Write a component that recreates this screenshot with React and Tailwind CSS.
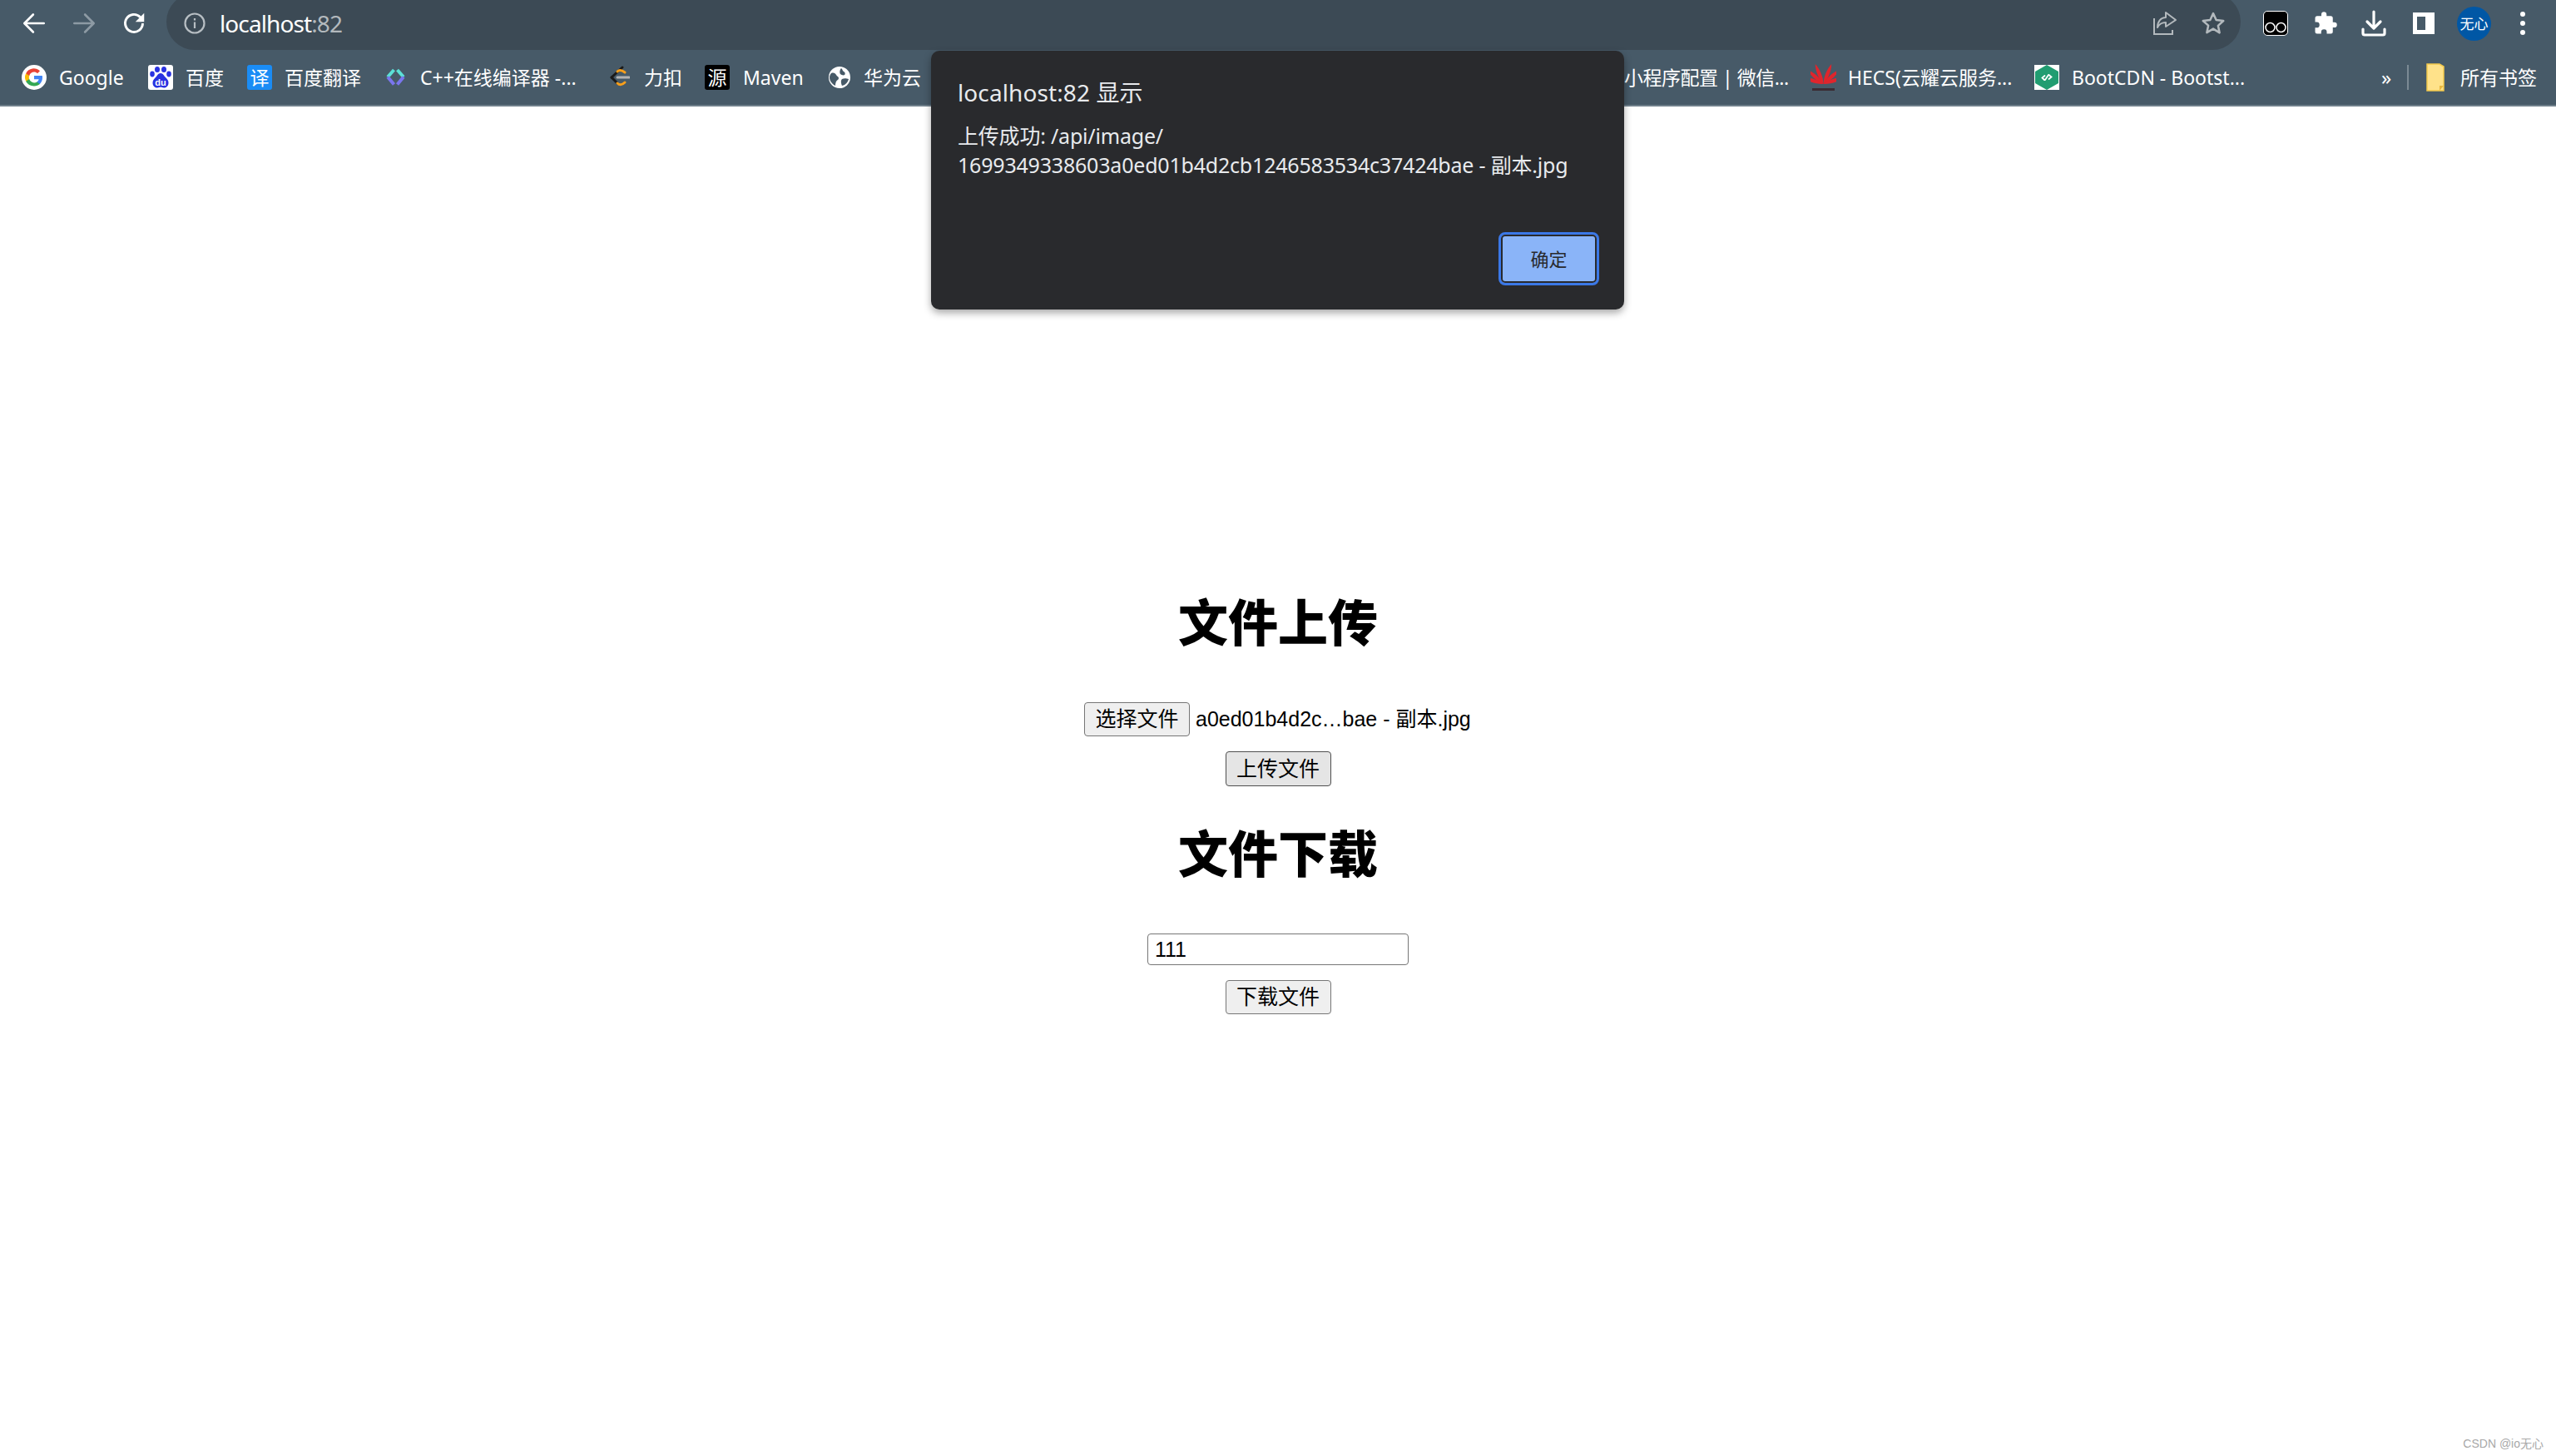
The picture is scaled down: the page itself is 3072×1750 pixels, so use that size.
import React from "react";

const ui = { fontFamily: '"Noto Sans", "Noto Sans CJK SC", sans-serif' };
const page = { fontFamily: '"Liberation Sans", "Noto Sans CJK SC", sans-serif' };

function GoogleIcon() {
  return (
    <svg width="30" height="30" viewBox="0 0 30 30">
      <circle cx="15" cy="15" r="15" fill="#fff" />
      <path d="M25 15.300c0-.8-.1-1.500-.2-2.200H15v4.100h5.600c-.2 1.300-1 2.400-2.100 3.100v2.600h3.400c2-1.800 3.100-4.500 3.100-7.600z" fill="#4285F4" />
      <path d="M15 25.500c2.800 0 5.200-.9 6.900-2.500l-3.400-2.600c-.9.600-2.100 1-3.500 1-2.700 0-5-1.800-5.800-4.300H5.200v2.700C6.900 23.200 10.700 25.500 15 25.500z" fill="#34A853" />
      <path d="M9.200 17.100c-.5-1.400-.5-2.800 0-4.200v-2.700H5.200a10.500 10.500 0 0 0 0 9.600l4-2.700z" fill="#FBBC05" />
      <path d="M15 8.600c1.500 0 2.900.5 4 1.600l3-3A10.500 10.500 0 0 0 5.200 10.200l4 2.700c.8-2.500 3.100-4.300 5.800-4.300z" fill="#EA4335" />
    </svg>
  );
}

function BaiduIcon() {
  return (
    <svg width="30" height="30" viewBox="0 0 30 30">
      <rect width="30" height="30" rx="3" fill="#fff" />
      <g fill="#2932e1">
        <ellipse cx="11" cy="5.500" rx="3" ry="3.600" />
        <ellipse cx="19" cy="5.500" rx="3" ry="3.600" />
        <ellipse cx="5" cy="11" rx="2.800" ry="3.400" />
        <ellipse cx="25" cy="11" rx="2.800" ry="3.400" />
        <path d="M15 10c-3 0-4 3-6 5-2 2-3.500 3.500-3.500 6.500 0 4 3 6 5.500 6 2 0 2.500-.7 4-.7s2 .7 4 .7c2.500 0 5.500-2 5.500-6 0-3-1.500-4.500-3.500-6.500-2-2-3-5-6-5z" />
      </g>
      <text x="15" y="25" textAnchor="middle" fontSize="11" fontWeight="700" fill="#fff" fontFamily="Liberation Sans, sans-serif">du</text>
    </svg>
  );
}

function CodeIcon() {
  return (
    <svg width="25" height="25" viewBox="0 0 25 25" fill="none" strokeWidth="4" strokeLinecap="butt">
      <path d="M10.500 3 3 11.500" stroke="#5ce1d6" />
      <path d="M3 11.500l7.500 9" stroke="#7a76ee" />
      <path d="M14.500 3 22 11.500" stroke="#5ce1d6" />
      <path d="M22 11.500l-7.500 9" stroke="#7a76ee" />
    </svg>
  );
}

function LeetIcon() {
  return (
    <svg width="25" height="30" viewBox="0 0 25 30" fill="none" strokeWidth="3" strokeLinecap="round">
      <path d="M16 3 3 15" stroke="#1a1a1a" />
      <path d="M3 15l7 7" stroke="#1a1a1a" />
      <path d="M10 22c2 2 5 3 9-1" stroke="#f89f1b" />
      <path d="M10 8c2-2 5-2 9 1" stroke="#f89f1b" />
      <path d="M10 15h14" stroke="#b3b3b3" />
    </svg>
  );
}

function GlobeIcon() {
  return (
    <svg width="26" height="26" viewBox="0 0 26 26">
      <circle cx="13" cy="13" r="13" fill="#fff" />
      <path d="M3 8c3-1 5 0 6 2s3 2 3 4-2 2-3 4-1 5-1 5C4 21 1 17 1 13c0-2 1-4 2-5z" fill="#475a68" />
      <path d="M15 2c2 1 1 3 3 4s2 3 1 4-4 0-5-1-1-5 1-7zM16 15c2-1 5-1 8 0-1 4-4 7-8 8-1-2-2-6 0-8z" fill="#475a68" />
    </svg>
  );
}

function HuaweiIcon() {
  return (
    <svg width="31" height="36" viewBox="0 0 31 36">
      <g fill="#e0252c">
        {[-72, -48, -22, 22, 48, 72].map((a) => (
          <path key={a} d="M15.500 26C12.500 18 12.500 8 15.500 0 18.500 8 18.500 18 15.500 26z" transform={`rotate(${a} 15.500 26)`} />
        ))}
      </g>
      <rect x="2" y="31" width="27" height="3" fill="#3a2c33" />
    </svg>
  );
}

function BootIcon() {
  return (
    <svg width="30" height="30" viewBox="0 0 30 30">
      <rect width="30" height="30" fill="#fff" />
      <path d="M15 0 29 8v14l-14 8-14-8V8z" fill="#219d71" />
      <path d="M12.500 13 9.500 15.500 12 18M17.500 12l3 2.500-3 2.500M13 18l4-6" fill="none" stroke="#fff" strokeWidth="1.800" strokeLinecap="round" />
    </svg>
  );
}

function FolderIcon() {
  return (
    <svg width="22" height="34" viewBox="0 0 22 34">
      <path d="M1 1h15l5 3v29H1z" fill="#ffe28a" stroke="#f2c94c" strokeWidth="1.500" />
      <path d="M16 33v-6h5" fill="#e9b93f" />
    </svg>
  );
}

function Bookmark({ icon, label, className }) {
  return (
    <div className={`flex shrink-0 items-center ${className}`}>
      {icon}
      <span className="text-[23px] leading-[30px] whitespace-nowrap text-white">{label}</span>
    </div>
  );
}

function Tile({ bg, children }) {
  return (
    <div className={`flex h-[30px] w-[30px] items-center justify-center rounded-[3px] text-[23px] leading-none text-white ${bg}`}>
      {children}
    </div>
  );
}

export default function App() {
  return (
    <div className="relative h-[1750px] w-[3072px] overflow-hidden bg-white" style={ui}>
      <header className="bg-[#475a68]">
        <div className="flex h-[60px] items-start">
          <div className="flex h-[55px] w-[200px] shrink-0 items-center pl-[27px]">
            <svg width="28" height="28" viewBox="0 0 24 24" fill="none" stroke="#fff" strokeWidth="2.300" strokeLinecap="round" strokeLinejoin="round">
              <path d="M22 12H2.500M11 3l-9 9 9 9" />
            </svg>
            <svg className="ml-[32px]" width="28" height="28" viewBox="0 0 24 24" fill="none" stroke="#8d9aa4" strokeWidth="2.300" strokeLinecap="round" strokeLinejoin="round">
              <path d="M2 12h19.500M13 3l9 9-9 9" />
            </svg>
            <svg className="ml-[32px]" width="28" height="28" viewBox="0 0 24 24" fill="none" stroke="#fff" strokeWidth="2.500">
              <path d="M21 12a9 9 0 1 1-2.600-6.400L21 8" />
              <path d="M22.500 1.500v9h-9z" fill="#fff" stroke="none" />
            </svg>
          </div>
          <div className="-mt-[8px] flex h-[68px] w-[2493px] shrink-0 items-center rounded-[34px] bg-[#3c4a55] pt-[4px]">
            <svg className="ml-[21px]" width="26" height="26" viewBox="0 0 26 26" fill="none" stroke="#b7bec3" strokeWidth="2.200">
              <circle cx="13" cy="13" r="11.500" />
              <path d="M13 11.500v7.500M13 7v2.500" />
            </svg>
            <div className="ml-[17px] text-[28px] leading-none tracking-[-0.9px] text-white">
              localhost<span className="text-[#b3b9bd]">:82</span>
            </div>
            <div className="ml-auto flex items-center pr-[18px]">
              <svg className="mr-[28px]" width="30" height="30" viewBox="0 0 30 30" fill="none" stroke="#b3b9bd" strokeWidth="2">
                <path d="M2 9v19h22v-5" />
                <path d="M16 2l12 9-12 8v-5c-5 0-8 2-10 6 0-7 4-12 10-12z" strokeLinejoin="round" />
              </svg>
              <svg width="30" height="30" viewBox="0 0 24 24" fill="none" stroke="#b3b9bd" strokeWidth="2" strokeLinejoin="round">
                <path d="M12 2.500l2.900 6.300 6.900.8-5.100 4.700 1.400 6.800L12 17.300 5.900 20.900l1.400-6.800L2.200 9.600l6.900-.8z" />
              </svg>
            </div>
          </div>
          <div className="flex h-[56px] flex-1 items-center">
            <div className="ml-[27px] flex h-[30px] w-[30px] shrink-0 items-end justify-center rounded-[5px] border border-white bg-black pb-[2px]">
              <svg width="26" height="14" viewBox="0 0 26 14" fill="none" stroke="#fff" strokeWidth="1.500">
                <circle cx="6.500" cy="7" r="5.500" />
                <circle cx="19.500" cy="7" r="5.500" />
              </svg>
            </div>
            <svg className="ml-[30px] shrink-0" width="30" height="30" viewBox="0 0 24 24" fill="#fff">
              <path d="M20.500 11H19V7a2 2 0 0 0-2-2h-4V3.500a2.500 2.500 0 0 0-5 0V5H4a2 2 0 0 0-2 2v3.800h1.500a2.700 2.700 0 0 1 0 5.400H2V20a2 2 0 0 0 2 2h3.800v-1.500a2.700 2.700 0 0 1 5.400 0V22H17a2 2 0 0 0 2-2v-4h1.500a2.500 2.500 0 0 0 0-5z" />
            </svg>
            <svg className="ml-[28px] shrink-0" width="30" height="32" viewBox="0 0 30 32" fill="none" stroke="#fff" strokeWidth="3.200" strokeLinecap="round" strokeLinejoin="round">
              <path d="M15 2v19M7 14l8 8 8-8" />
              <path d="M2 23v5a2 2 0 0 0 2 2h22a2 2 0 0 0 2-2v-5" />
            </svg>
            <div className="ml-[32px] flex h-[26px] w-[26px] shrink-0 justify-end bg-white">
              <div className="mt-[5px] mr-[11px] h-[16px] w-[10px] bg-[#475a68]" />
            </div>
            <div className="ml-[27px] flex h-[41px] w-[41px] shrink-0 items-center justify-center rounded-full bg-[#0057a5] text-[17px] leading-none text-white">
              无心
            </div>
            <div className="ml-[35px] flex shrink-0 flex-col gap-[5px]">
              <div className="h-[6px] w-[6px] rounded-full bg-white" />
              <div className="h-[6px] w-[6px] rounded-full bg-white" />
              <div className="h-[6px] w-[6px] rounded-full bg-white" />
            </div>
          </div>
        </div>
        <div className="flex h-[68px] items-center border-b-2 border-[#6f7f8b] pl-[26px]">
          <Bookmark className="w-[152px] gap-[15px]" icon={<GoogleIcon />} label="Google" />
          <Bookmark className="w-[119px] gap-[15px]" icon={<BaiduIcon />} label="百度" />
          <Bookmark className="w-[166px] gap-[15px]" icon={<Tile bg="bg-[#1a8cf5]">译</Tile>} label="百度翻译" />
          <Bookmark className="w-[269px] gap-[17px]" icon={<CodeIcon />} label="C++在线编译器 -..." />
          <Bookmark className="w-[115px] gap-[17px]" icon={<LeetIcon />} label="力扣" />
          <Bookmark className="w-[149px] gap-[16px]" icon={<Tile bg="bg-black">源</Tile>} label="Maven" />
          <Bookmark className="w-[956px] gap-[16px]" icon={<GlobeIcon />} label="华为云" />
          <Bookmark className="w-[224px] tracking-[-0.5px]" label="小程序配置 | 微信..." />
          <Bookmark className="w-[269px] gap-[14px]" icon={<HuaweiIcon />} label="HECS(云耀云服务..." />
          <Bookmark className="w-[417px] gap-[15px]" icon={<BootIcon />} label="BootCDN - Bootst..." />
          <div className="flex w-[31px] shrink-0 text-[24px] leading-none text-white">»</div>
          <div className="h-[30px] w-[2px] shrink-0 bg-[#7b8a95]" />
          <Bookmark className="ml-[21px] gap-[19px]" icon={<FolderIcon />} label="所有书签" />
        </div>
      </header>

      <main className="flex flex-col items-center pt-[581px] text-black" style={page}>
        <h1 className="text-[60px] leading-[84px] font-black">文件上传</h1>
        <div className="mt-[50px] flex h-[42px] w-[466px] items-center">
          <button className="h-[41px] w-[127px] shrink-0 rounded-[4px] border-[1.500px] border-[#767676] bg-[#efefef] text-[25px] leading-none">选择文件</button>
          <span className="ml-[7px] text-[25px] leading-none whitespace-nowrap">a0ed01b4d2c…bae - 副本.jpg</span>
        </div>
        <button className="mt-[18px] h-[42px] w-[127px] rounded-[4px] border-[1.500px] border-[#4f4f4f] bg-[#e5e5e5] text-[25px] leading-none">上传文件</button>
        <h1 className="mt-[42px] text-[60px] leading-[84px] font-black">文件下载</h1>
        <div className="mt-[51px] flex h-[38px] w-[314px] items-center rounded-[4px] border-[1.500px] border-[#767676] pl-[8px] text-[25px] leading-none">111</div>
        <button className="mt-[18px] h-[41px] w-[127px] rounded-[4px] border-[1.500px] border-[#767676] bg-[#efefef] text-[25px] leading-none">下载文件</button>
      </main>

      <div className="absolute top-[61px] left-[1119px] flex h-[311px] w-[833px] flex-col rounded-[10px] bg-[#292a2d] pt-[30px] pr-[30px] pl-[32px] shadow-[0_4px_10px_rgba(0,0,0,0.35)]">
        <div className="text-[28px] leading-[40px] tracking-[0.1px] text-[#e8eaed]">localhost:82 显示</div>
        <div className="mt-[15px] text-[25px] leading-[35px] tracking-[-0.2px] text-[#e8eaed]">
          <div>上传成功: /api/image/</div>
          <div className="whitespace-nowrap">1699349338603a0ed01b4d2cb1246583534c37424bae - 副本.jpg</div>
        </div>
        <div className="mt-auto mb-[29px] flex justify-end">
          <div className="flex h-[64px] w-[121px] items-center justify-center rounded-[8px] border-[3px] border-[#3b78e7] bg-[#8ab4f8] text-[22px] leading-none text-[#292a2d] outline-[2px] -outline-offset-[5px] outline-[#292a2d]">
            确定
          </div>
        </div>
      </div>

      <div className="absolute right-[15px] bottom-[8px] text-[14px] leading-none text-[#a8a8a8]" style={page}>CSDN @io无心</div>
    </div>
  );
}
